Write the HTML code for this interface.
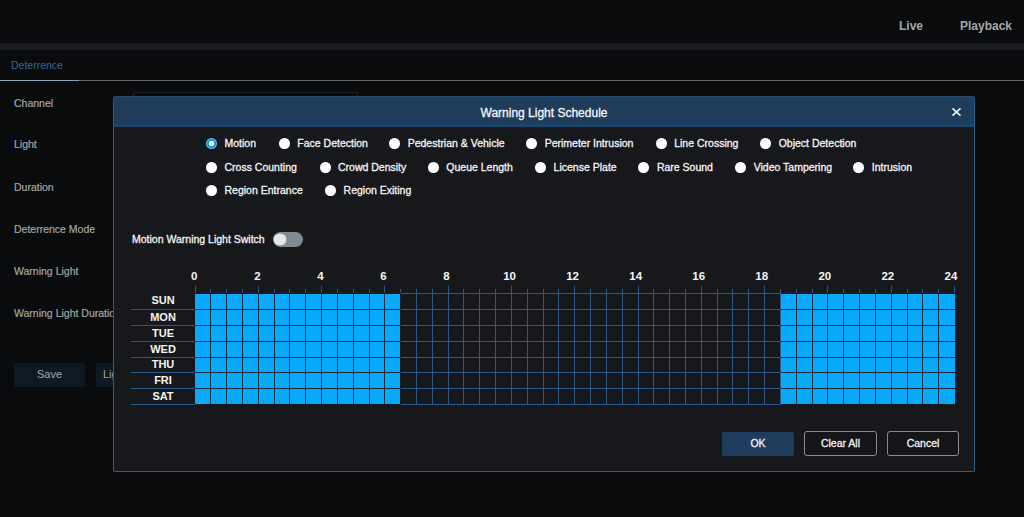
<!DOCTYPE html>
<html><head><meta charset="utf-8">
<style>
*{margin:0;padding:0;box-sizing:border-box}
html,body{width:1024px;height:517px;overflow:hidden;background:#0a0b0d;font-family:"Liberation Sans",sans-serif}
.a{position:absolute;white-space:nowrap}
#top{left:0;top:0;width:1024px;height:43px;background:#0a0b0d}
#strip{left:0;top:43px;width:1024px;height:7px;background:#1b1c1f}
.nav{font-size:12px;font-weight:bold;color:#a4a6aa;top:19px}
.tab{left:11px;top:59px;font-size:10.5px;color:#30689a}
#tabline{left:0;top:80px;width:1024px;height:1px;background:#626466}
#tabul{left:0;top:80px;width:79px;height:1px;background:#86a4bc}
.lbl{left:14px;font-size:10.5px;color:#a5a5a5;-webkit-text-stroke:0.2px #a5a5a5}
.btn0{top:363px;height:24px;background:#0f1923;border-radius:2px}
#selbox{left:133px;top:92px;width:225px;height:10px;border:1px solid #1e2126;border-radius:2px}
#modal{left:113px;top:96px;width:862px;height:376px;background:#17181c;border:1px solid #2d5a86;border-top-color:#284d74;border-radius:2px;overflow:hidden}
#mhead{left:0;top:0;width:860px;height:30px;background:#1f3c5a}
#mtitle{left:0;top:0;width:860px;height:30px;line-height:32px;text-align:center;color:#f2f4f7;font-size:12px;-webkit-text-stroke:0.3px #f2f4f7}
.rd{width:10.5px;height:10.5px;border-radius:50%;background:#fff}
.rd.on{width:11px;height:11px}
.rd.on{background:radial-gradient(circle at 50% 50%,#fff 0,#fff 2.3px,#1c94e6 3.1px,#1c94e6 4.2px,#4cc0fa 5px)}
.rt{font-size:10.5px;color:#f4f4f4;-webkit-text-stroke:0.3px #f4f4f4}
.sw{font-size:10.5px;color:#f4f4f4;-webkit-text-stroke:0.3px #f4f4f4}
.hr{font-size:11.5px;font-weight:bold;color:#f4f4f4}
.day{font-size:11px;font-weight:bold;color:#f4f4f4;width:64px;text-align:center;left:131px}
.btn{top:431px;height:25px;border-radius:3px;font-size:10.5px;color:#f2f2f2;text-align:center;line-height:24px;-webkit-text-stroke:0.3px #f2f2f2}
</style></head><body>
<div class="a" id="top"></div>
<div class="a" id="strip"></div>
<div class="a nav" style="left:899px">Live</div>
<div class="a nav" style="left:960px">Playback</div>
<div class="a tab">Deterrence</div>
<div class="a" id="tabline"></div>
<div class="a" id="tabul"></div>
<div class="a lbl" style="top:97px">Channel</div>
<div class="a lbl" style="top:138px">Light</div>
<div class="a lbl" style="top:181px">Duration</div>
<div class="a lbl" style="top:223px">Deterrence Mode</div>
<div class="a lbl" style="top:265px">Warning Light</div>
<div class="a lbl" style="top:307px">Warning Light Duration</div>
<div class="a btn0" style="left:14px;width:71px;color:#a3a6aa;font-size:11px;text-align:center;line-height:23px">Save</div>
<div class="a btn0" style="left:96px;width:60px;color:#a3a6aa;font-size:11px;line-height:23px;padding-left:7px">Light</div>
<div class="a" id="selbox"></div>

<div class="a" id="modal">
 <div class="a" id="mhead"></div>
 <div class="a" style="left:0;top:27px;width:860px;height:3px;background:#1f446b"></div>
 <div class="a" id="mtitle">Warning Light Schedule</div>
 <svg class="a" style="left:838px;top:11px" width="9" height="8" viewBox="0 0 9 8"><path d="M0.5 0.4L8.5 7.6M8.5 0.4L0.5 7.6" stroke="#fff" stroke-width="1.5"/></svg>
 <div id="radios"><div class="a rd on" style="left:92px;top:41px"></div><div class="a rt" style="left:110.5px;top:40px">Motion</div><div class="a rd" style="left:165px;top:41px"></div><div class="a rt" style="left:183.3px;top:40px">Face Detection</div><div class="a rd" style="left:275px;top:41px"></div><div class="a rt" style="left:293.7px;top:40px">Pedestrian &amp; Vehicle</div><div class="a rd" style="left:412px;top:41px"></div><div class="a rt" style="left:430.7px;top:40px">Perimeter Intrusion</div><div class="a rd" style="left:542px;top:41px"></div><div class="a rt" style="left:560.2px;top:40px">Line Crossing</div><div class="a rd" style="left:646px;top:41px"></div><div class="a rt" style="left:664.7px;top:40px">Object Detection</div><div class="a rd" style="left:92px;top:65px"></div><div class="a rt" style="left:110.5px;top:64px">Cross Counting</div><div class="a rd" style="left:206px;top:65px"></div><div class="a rt" style="left:224.0px;top:64px">Crowd Density</div><div class="a rd" style="left:314px;top:65px"></div><div class="a rt" style="left:332.3px;top:64px">Queue Length</div><div class="a rd" style="left:421px;top:65px"></div><div class="a rt" style="left:439.6px;top:64px">License Plate</div><div class="a rd" style="left:524px;top:65px"></div><div class="a rt" style="left:542.9px;top:64px">Rare Sound</div><div class="a rd" style="left:621px;top:65px"></div><div class="a rt" style="left:639.7px;top:64px">Video Tampering</div><div class="a rd" style="left:739px;top:65px"></div><div class="a rt" style="left:757.8px;top:64px">Intrusion</div><div class="a rd" style="left:92px;top:88px"></div><div class="a rt" style="left:110.5px;top:87px">Region Entrance</div><div class="a rd" style="left:211px;top:88px"></div><div class="a rt" style="left:229.6px;top:87px">Region Exiting</div></div>
 <div class="a sw" style="left:18px;top:136px">Motion Warning Light Switch</div>
 <div class="a" style="left:159px;top:135px;width:30px;height:15px;border-radius:8px;background:#838990"></div>
 <div class="a" style="left:160.2px;top:136.5px;width:11.6px;height:11.6px;border-radius:50%;background:#e6e7eb;box-shadow:0 0 0 0.6px #c9ccd0"></div>
 <div id="grid"><div class="a" style="left:81px;top:189px;width:1px;height:7px;background:#2a5888"></div><div class="a" style="left:96px;top:192px;width:1px;height:4px;background:#2a5888"></div><div class="a" style="left:112px;top:192px;width:1px;height:4px;background:#2a5888"></div><div class="a" style="left:128px;top:192px;width:1px;height:4px;background:#2a5888"></div><div class="a" style="left:144px;top:189px;width:1px;height:7px;background:#2a5888"></div><div class="a" style="left:160px;top:192px;width:1px;height:4px;background:#2a5888"></div><div class="a" style="left:175px;top:192px;width:1px;height:4px;background:#2a5888"></div><div class="a" style="left:191px;top:192px;width:1px;height:4px;background:#2a5888"></div><div class="a" style="left:207px;top:189px;width:1px;height:7px;background:#2a5888"></div><div class="a" style="left:223px;top:192px;width:1px;height:4px;background:#2a5888"></div><div class="a" style="left:239px;top:192px;width:1px;height:4px;background:#2a5888"></div><div class="a" style="left:255px;top:192px;width:1px;height:4px;background:#2a5888"></div><div class="a" style="left:270px;top:189px;width:1px;height:7px;background:#2a5888"></div><div class="a" style="left:286px;top:192px;width:1px;height:4px;background:#2a5888"></div><div class="a" style="left:302px;top:192px;width:1px;height:4px;background:#2a5888"></div><div class="a" style="left:318px;top:192px;width:1px;height:4px;background:#2a5888"></div><div class="a" style="left:334px;top:189px;width:1px;height:7px;background:#2a5888"></div><div class="a" style="left:349px;top:192px;width:1px;height:4px;background:#2a5888"></div><div class="a" style="left:365px;top:192px;width:1px;height:4px;background:#2a5888"></div><div class="a" style="left:381px;top:192px;width:1px;height:4px;background:#2a5888"></div><div class="a" style="left:397px;top:189px;width:1px;height:7px;background:#2a5888"></div><div class="a" style="left:413px;top:192px;width:1px;height:4px;background:#2a5888"></div><div class="a" style="left:429px;top:192px;width:1px;height:4px;background:#2a5888"></div><div class="a" style="left:444px;top:192px;width:1px;height:4px;background:#2a5888"></div><div class="a" style="left:460px;top:189px;width:1px;height:7px;background:#2a5888"></div><div class="a" style="left:476px;top:192px;width:1px;height:4px;background:#2a5888"></div><div class="a" style="left:492px;top:192px;width:1px;height:4px;background:#2a5888"></div><div class="a" style="left:508px;top:192px;width:1px;height:4px;background:#2a5888"></div><div class="a" style="left:524px;top:189px;width:1px;height:7px;background:#2a5888"></div><div class="a" style="left:539px;top:192px;width:1px;height:4px;background:#2a5888"></div><div class="a" style="left:555px;top:192px;width:1px;height:4px;background:#2a5888"></div><div class="a" style="left:571px;top:192px;width:1px;height:4px;background:#2a5888"></div><div class="a" style="left:587px;top:189px;width:1px;height:7px;background:#2a5888"></div><div class="a" style="left:603px;top:192px;width:1px;height:4px;background:#2a5888"></div><div class="a" style="left:618px;top:192px;width:1px;height:4px;background:#2a5888"></div><div class="a" style="left:634px;top:192px;width:1px;height:4px;background:#2a5888"></div><div class="a" style="left:650px;top:189px;width:1px;height:7px;background:#2a5888"></div><div class="a" style="left:666px;top:192px;width:1px;height:4px;background:#2a5888"></div><div class="a" style="left:682px;top:192px;width:1px;height:4px;background:#2a5888"></div><div class="a" style="left:698px;top:192px;width:1px;height:4px;background:#2a5888"></div><div class="a" style="left:713px;top:189px;width:1px;height:7px;background:#2a5888"></div><div class="a" style="left:729px;top:192px;width:1px;height:4px;background:#2a5888"></div><div class="a" style="left:745px;top:192px;width:1px;height:4px;background:#2a5888"></div><div class="a" style="left:761px;top:192px;width:1px;height:4px;background:#2a5888"></div><div class="a" style="left:777px;top:189px;width:1px;height:7px;background:#2a5888"></div><div class="a" style="left:793px;top:192px;width:1px;height:4px;background:#2a5888"></div><div class="a" style="left:808px;top:192px;width:1px;height:4px;background:#2a5888"></div><div class="a" style="left:824px;top:192px;width:1px;height:4px;background:#2a5888"></div><div class="a" style="left:840px;top:189px;width:1px;height:7px;background:#2a5888"></div><div class="a hr" style="left:50.3px;width:60px;text-align:center;top:173px">0</div><div class="a hr" style="left:113.35px;width:60px;text-align:center;top:173px">2</div><div class="a hr" style="left:176.4px;width:60px;text-align:center;top:173px">4</div><div class="a hr" style="left:239.45px;width:60px;text-align:center;top:173px">6</div><div class="a hr" style="left:302.5px;width:60px;text-align:center;top:173px">8</div><div class="a hr" style="left:365.55px;width:60px;text-align:center;top:173px">10</div><div class="a hr" style="left:428.6px;width:60px;text-align:center;top:173px">12</div><div class="a hr" style="left:491.65px;width:60px;text-align:center;top:173px">14</div><div class="a hr" style="left:554.7px;width:60px;text-align:center;top:173px">16</div><div class="a hr" style="left:617.75px;width:60px;text-align:center;top:173px">18</div><div class="a hr" style="left:680.8px;width:60px;text-align:center;top:173px">20</div><div class="a hr" style="left:743.85px;width:60px;text-align:center;top:173px">22</div><div class="a hr" style="left:806.9px;width:60px;text-align:center;top:173px">24</div><div class="a" style="left:81px;top:196px;width:1px;height:112px;background:#2a5888"></div><div class="a" style="left:96px;top:196px;width:1px;height:112px;background:#2a5888"></div><div class="a" style="left:112px;top:196px;width:1px;height:112px;background:#2a5888"></div><div class="a" style="left:128px;top:196px;width:1px;height:112px;background:#2a5888"></div><div class="a" style="left:144px;top:196px;width:1px;height:112px;background:#2a5888"></div><div class="a" style="left:160px;top:196px;width:1px;height:112px;background:#2a5888"></div><div class="a" style="left:175px;top:196px;width:1px;height:112px;background:#2a5888"></div><div class="a" style="left:191px;top:196px;width:1px;height:112px;background:#2a5888"></div><div class="a" style="left:207px;top:196px;width:1px;height:112px;background:#2a5888"></div><div class="a" style="left:223px;top:196px;width:1px;height:112px;background:#2a5888"></div><div class="a" style="left:239px;top:196px;width:1px;height:112px;background:#2a5888"></div><div class="a" style="left:255px;top:196px;width:1px;height:112px;background:#2a5888"></div><div class="a" style="left:270px;top:196px;width:1px;height:112px;background:#2a5888"></div><div class="a" style="left:286px;top:196px;width:1px;height:112px;background:#2a5888"></div><div class="a" style="left:302px;top:196px;width:1px;height:112px;background:#2a5888"></div><div class="a" style="left:318px;top:196px;width:1px;height:112px;background:#2a5888"></div><div class="a" style="left:334px;top:196px;width:1px;height:112px;background:#2a5888"></div><div class="a" style="left:349px;top:196px;width:1px;height:112px;background:#2a5888"></div><div class="a" style="left:365px;top:196px;width:1px;height:112px;background:#2a5888"></div><div class="a" style="left:381px;top:196px;width:1px;height:112px;background:#2a5888"></div><div class="a" style="left:397px;top:196px;width:1px;height:112px;background:#2a5888"></div><div class="a" style="left:413px;top:196px;width:1px;height:112px;background:#2a5888"></div><div class="a" style="left:429px;top:196px;width:1px;height:112px;background:#2a5888"></div><div class="a" style="left:444px;top:196px;width:1px;height:112px;background:#2a5888"></div><div class="a" style="left:460px;top:196px;width:1px;height:112px;background:#2a5888"></div><div class="a" style="left:476px;top:196px;width:1px;height:112px;background:#2a5888"></div><div class="a" style="left:492px;top:196px;width:1px;height:112px;background:#2a5888"></div><div class="a" style="left:508px;top:196px;width:1px;height:112px;background:#2a5888"></div><div class="a" style="left:524px;top:196px;width:1px;height:112px;background:#2a5888"></div><div class="a" style="left:539px;top:196px;width:1px;height:112px;background:#2a5888"></div><div class="a" style="left:555px;top:196px;width:1px;height:112px;background:#2a5888"></div><div class="a" style="left:571px;top:196px;width:1px;height:112px;background:#2a5888"></div><div class="a" style="left:587px;top:196px;width:1px;height:112px;background:#2a5888"></div><div class="a" style="left:603px;top:196px;width:1px;height:112px;background:#2a5888"></div><div class="a" style="left:618px;top:196px;width:1px;height:112px;background:#2a5888"></div><div class="a" style="left:634px;top:196px;width:1px;height:112px;background:#2a5888"></div><div class="a" style="left:650px;top:196px;width:1px;height:112px;background:#2a5888"></div><div class="a" style="left:666px;top:196px;width:1px;height:112px;background:#2a5888"></div><div class="a" style="left:682px;top:196px;width:1px;height:112px;background:#2a5888"></div><div class="a" style="left:698px;top:196px;width:1px;height:112px;background:#2a5888"></div><div class="a" style="left:713px;top:196px;width:1px;height:112px;background:#2a5888"></div><div class="a" style="left:729px;top:196px;width:1px;height:112px;background:#2a5888"></div><div class="a" style="left:745px;top:196px;width:1px;height:112px;background:#2a5888"></div><div class="a" style="left:761px;top:196px;width:1px;height:112px;background:#2a5888"></div><div class="a" style="left:777px;top:196px;width:1px;height:112px;background:#2a5888"></div><div class="a" style="left:793px;top:196px;width:1px;height:112px;background:#2a5888"></div><div class="a" style="left:808px;top:196px;width:1px;height:112px;background:#2a5888"></div><div class="a" style="left:824px;top:196px;width:1px;height:112px;background:#2a5888"></div><div class="a" style="left:840px;top:196px;width:1px;height:112px;background:#2a5888"></div><div class="a" style="left:81px;top:196px;width:760px;height:1px;background:#2a5888"></div><div class="a" style="left:81px;top:212px;width:760px;height:1px;background:#2a5888"></div><div class="a" style="left:81px;top:228px;width:760px;height:1px;background:#2a5888"></div><div class="a" style="left:81px;top:244px;width:760px;height:1px;background:#2a5888"></div><div class="a" style="left:81px;top:260px;width:760px;height:1px;background:#2a5888"></div><div class="a" style="left:81px;top:275px;width:760px;height:1px;background:#2a5888"></div><div class="a" style="left:81px;top:291px;width:760px;height:1px;background:#2a5888"></div><div class="a" style="left:81px;top:307px;width:760px;height:1px;background:#2a5888"></div><div class="a" style="left:81px;top:307px;width:205px;height:1px;background:#17181c"></div><div class="a" style="left:286px;top:196px;width:1px;height:112px;background:#17181c"></div><div class="a" style="left:81px;top:196px;width:205px;height:1px;background:#17181c"></div><div class="a" style="left:81px;top:197px;width:205px;height:110px;background:#08a8fa"></div><div class="a" style="left:96px;top:197px;width:1px;height:110px;background:#1b2a3a"></div><div class="a" style="left:112px;top:197px;width:1px;height:110px;background:#1b2a3a"></div><div class="a" style="left:128px;top:197px;width:1px;height:110px;background:#1b2a3a"></div><div class="a" style="left:144px;top:197px;width:1px;height:110px;background:#1b2a3a"></div><div class="a" style="left:160px;top:197px;width:1px;height:110px;background:#1b2a3a"></div><div class="a" style="left:175px;top:197px;width:1px;height:110px;background:#1b2a3a"></div><div class="a" style="left:191px;top:197px;width:1px;height:110px;background:#1b2a3a"></div><div class="a" style="left:207px;top:197px;width:1px;height:110px;background:#1b2a3a"></div><div class="a" style="left:223px;top:197px;width:1px;height:110px;background:#1b2a3a"></div><div class="a" style="left:239px;top:197px;width:1px;height:110px;background:#1b2a3a"></div><div class="a" style="left:255px;top:197px;width:1px;height:110px;background:#1b2a3a"></div><div class="a" style="left:270px;top:197px;width:1px;height:110px;background:#1b2a3a"></div><div class="a" style="left:81px;top:212px;width:205px;height:1px;background:#1b2a3a"></div><div class="a" style="left:81px;top:228px;width:205px;height:1px;background:#1b2a3a"></div><div class="a" style="left:81px;top:244px;width:205px;height:1px;background:#1b2a3a"></div><div class="a" style="left:81px;top:260px;width:205px;height:1px;background:#1b2a3a"></div><div class="a" style="left:81px;top:275px;width:205px;height:1px;background:#1b2a3a"></div><div class="a" style="left:81px;top:291px;width:205px;height:1px;background:#1b2a3a"></div><div class="a" style="left:667px;top:307px;width:174px;height:1px;background:#17181c"></div><div class="a" style="left:841px;top:196px;width:1px;height:112px;background:#17181c"></div><div class="a" style="left:667px;top:196px;width:174px;height:1px;background:#17181c"></div><div class="a" style="left:667px;top:197px;width:174px;height:110px;background:#08a8fa"></div><div class="a" style="left:682px;top:197px;width:1px;height:110px;background:#1b2a3a"></div><div class="a" style="left:698px;top:197px;width:1px;height:110px;background:#1b2a3a"></div><div class="a" style="left:713px;top:197px;width:1px;height:110px;background:#1b2a3a"></div><div class="a" style="left:729px;top:197px;width:1px;height:110px;background:#1b2a3a"></div><div class="a" style="left:745px;top:197px;width:1px;height:110px;background:#1b2a3a"></div><div class="a" style="left:761px;top:197px;width:1px;height:110px;background:#1b2a3a"></div><div class="a" style="left:777px;top:197px;width:1px;height:110px;background:#1b2a3a"></div><div class="a" style="left:793px;top:197px;width:1px;height:110px;background:#1b2a3a"></div><div class="a" style="left:808px;top:197px;width:1px;height:110px;background:#1b2a3a"></div><div class="a" style="left:824px;top:197px;width:1px;height:110px;background:#1b2a3a"></div><div class="a" style="left:667px;top:212px;width:174px;height:1px;background:#1b2a3a"></div><div class="a" style="left:667px;top:228px;width:174px;height:1px;background:#1b2a3a"></div><div class="a" style="left:667px;top:244px;width:174px;height:1px;background:#1b2a3a"></div><div class="a" style="left:667px;top:260px;width:174px;height:1px;background:#1b2a3a"></div><div class="a" style="left:667px;top:275px;width:174px;height:1px;background:#1b2a3a"></div><div class="a" style="left:667px;top:291px;width:174px;height:1px;background:#1b2a3a"></div><div class="a" style="left:17px;top:212px;width:64px;height:1px;background:#2a5888"></div><div class="a" style="left:17px;top:228px;width:64px;height:1px;background:#2a5888"></div><div class="a" style="left:17px;top:244px;width:64px;height:1px;background:#2a5888"></div><div class="a" style="left:17px;top:260px;width:64px;height:1px;background:#2a5888"></div><div class="a" style="left:17px;top:275px;width:64px;height:1px;background:#2a5888"></div><div class="a" style="left:17px;top:291px;width:64px;height:1px;background:#2a5888"></div><div class="a" style="left:17px;top:307px;width:64px;height:1px;background:#2a5888"></div><div class="a day" style="left:17px;top:196px;height:15px;line-height:15px">SUN</div><div class="a day" style="left:17px;top:213px;height:15px;line-height:15px">MON</div><div class="a day" style="left:17px;top:229px;height:15px;line-height:15px">TUE</div><div class="a day" style="left:17px;top:245px;height:15px;line-height:15px">WED</div><div class="a day" style="left:17px;top:260px;height:15px;line-height:15px">THU</div><div class="a day" style="left:17px;top:276px;height:15px;line-height:15px">FRI</div><div class="a day" style="left:17px;top:292px;height:15px;line-height:15px">SAT</div></div>
 <div class="a btn" style="left:608px;width:72px;background:#1f3d5c;height:24px;top:335px;line-height:23px;border-radius:2px">OK</div>
 <div class="a btn" style="left:690px;width:73px;border:1px solid #8a8c90;background:#141519;top:334px;line-height:22px">Clear All</div>
 <div class="a btn" style="left:773px;width:72px;border:1px solid #8a8c90;background:#141519;top:334px;line-height:22px">Cancel</div>
</div>
</body></html>
